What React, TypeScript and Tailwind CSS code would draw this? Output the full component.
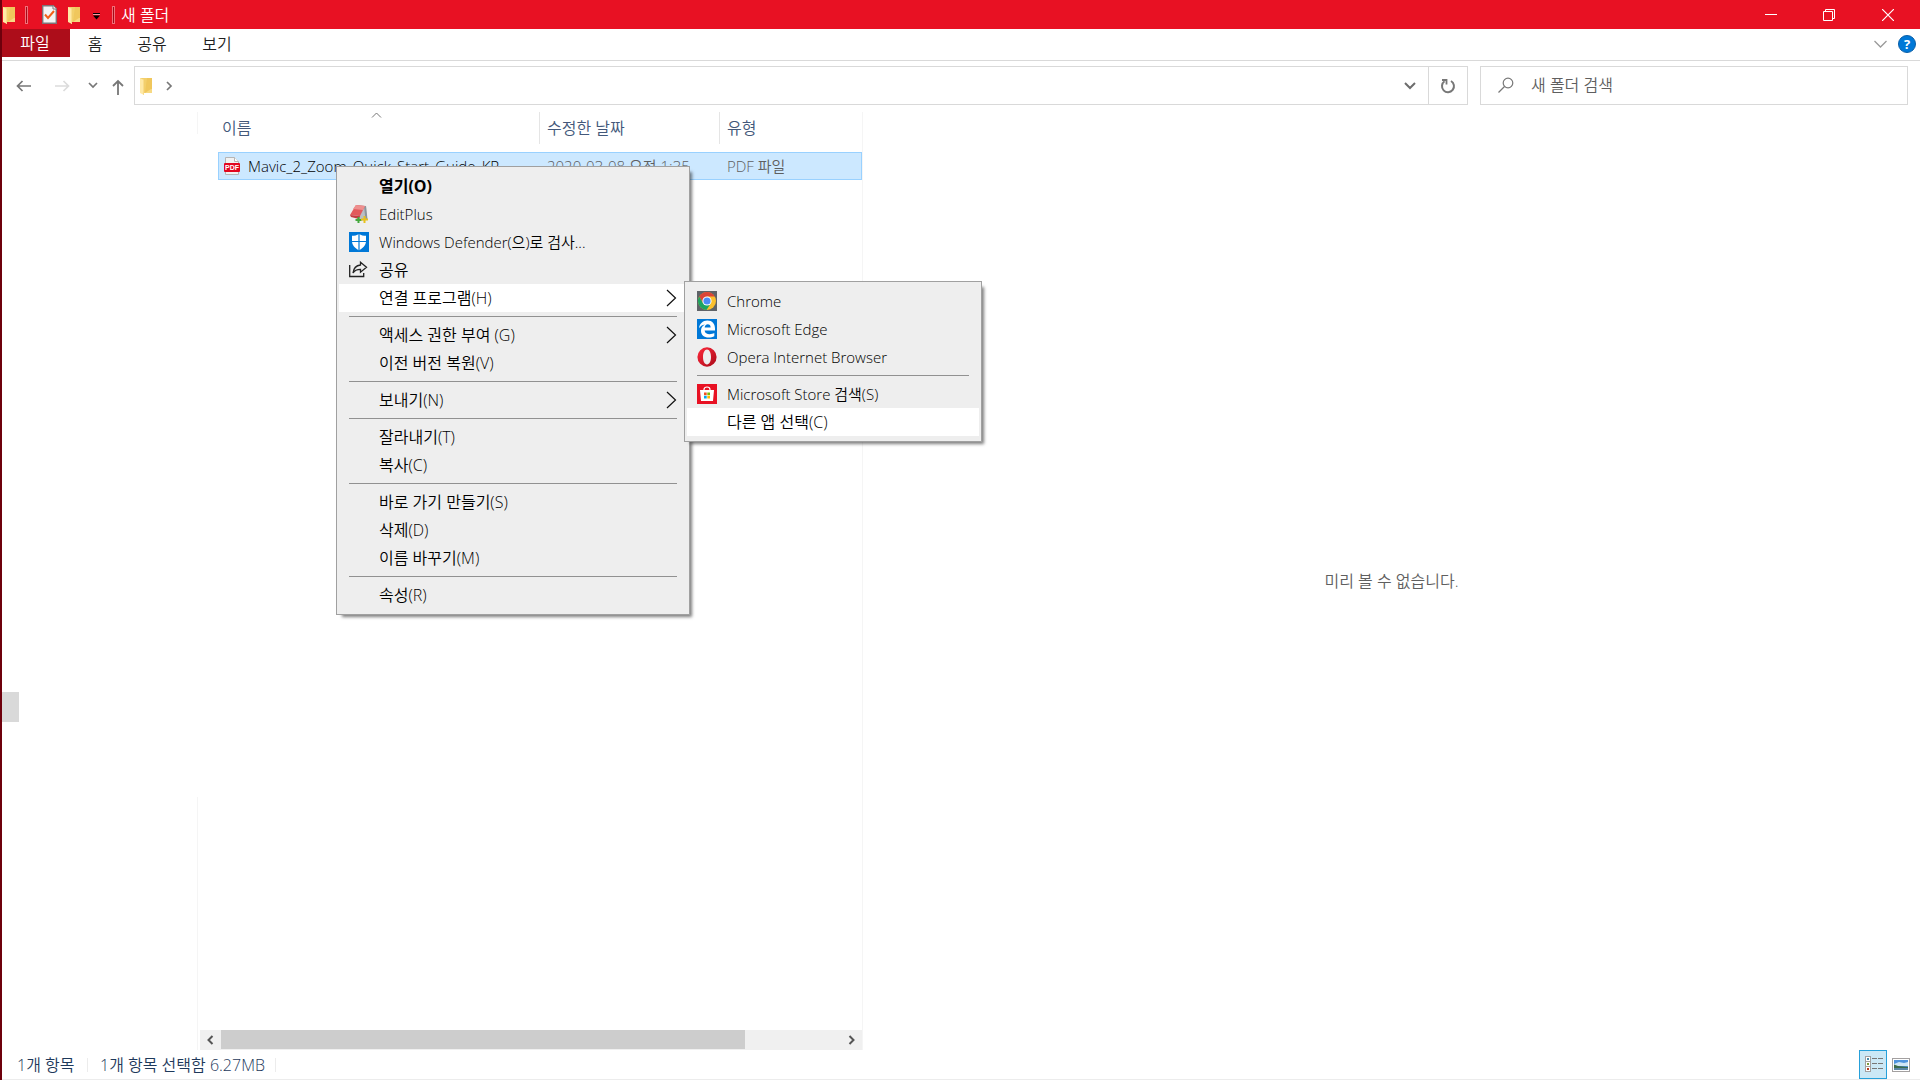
import React from "react";

type IconProps = { className?: string };

function FolderIcon({ className }: IconProps) {
  return (
    <svg className={className} width="13" height="18" viewBox="0 0 13 18">
      <path d="M0 1h8v15H0z" fill="#f3cf6b" />
      <path d="M7 1h5v13l-1 2H5z" fill="#f0c75c" />
      <path d="M11 12h1v4h-7z" fill="#f7d983" />
      <path d="M0 1l4 2v15l-4-2z" fill="#ffe9a6" />
      <path d="M3 2.500L4 3v15l-1-.5z" fill="#f9dc8a" />
    </svg>
  );
}

function CheckDocIcon() {
  return (
    <svg width="15" height="19" viewBox="0 0 15 19">
      <path d="M.7 .7h10.600l3 3v14.600H.7z" fill="#f4f4f4" stroke="#7d7478" strokeWidth="1.400" />
      <path d="M11 .7v3.300h3.300" fill="#fff" stroke="#7d7478" />
      <path d="M3 9.500l3 3.500 6-7" fill="none" stroke="#f0601a" strokeWidth="2" />
    </svg>
  );
}

function PdfIcon() {
  return (
    <svg className="shrink-0" width="16" height="18" viewBox="0 0 16 18" aria-hidden="true">
      <path d="M1.500 .5h9l4 4v13h-13z" fill="#f2f2f2" stroke="#b5b5b5" />
      <path d="M10.500 .5v4h4" fill="#fff" stroke="#b5b5b5" />
      <rect y="6" width="16" height="9" rx="1" fill="#e2061f" />
      <text x="8" y="13" textAnchor="middle" fontSize="7" fontWeight="bold" fill="#fff" fontFamily="Liberation Sans, sans-serif">
        PDF
      </text>
    </svg>
  );
}

function EditPlusIcon() {
  return (
    <svg width="20" height="20" viewBox="0 0 20 20">
      <path d="M7 1l10 1 1 14-8 1z" fill="#b9bfc4" />
      <path d="M15 2l2 0 1.500 13-2 1z" fill="#8c959c" />
      <path d="M7 1l9 1-5 10L1 11z" fill="#e2595c" />
      <path d="M7 1l9 1-2 4-10-1z" fill="#ee8f8e" />
      <path d="M1 11l10 1-1 3L2 13z" fill="#c63b42" />
      <path d="M8.500 13h2v2h2v2h-2v2h-2v-2h-2v-2h2z" fill="#43a83c" />
      <path d="M14.500 12h2v2.500H19v2h-2.500V19h-2v-2.500H12v-2h2.500z" fill="#e8c11c" />
    </svg>
  );
}

function DefenderIcon() {
  return (
    <svg width="20" height="20" viewBox="0 0 20 20">
      <path fill="#0078d7" d="M0 0h20v20H0z" />
      <path d="M10 2c2 1.300 4.500 1.800 7 1.800V9c0 4-3 7.500-7 9.200C6 16.500 3 13 3 9V3.800c2.500 0 5-.5 7-1.800z" fill="#fff" />
      <path d="M10 2v16M3 9.500h14" stroke="#0078d7" strokeWidth="1.200" />
    </svg>
  );
}

function ShareIcon() {
  return (
    <svg width="20" height="20" viewBox="0 0 20 20" fill="none" stroke="#222" strokeWidth="1.300">
      <path d="M.7 5v11.500h14V13" />
      <path d="M11.500 2.200l6 5-6 5V9.300c-3.500 0-6 1-7.500 3.700.5-4.500 3-7.500 7.500-8z" />
    </svg>
  );
}

function ChromeIcon() {
  return (
    <svg width="20" height="20" viewBox="0 0 20 20">
      <path fill="#5f6368" d="M0 0h20v20H0z" />
      <circle cx="10" cy="10" r="9" fill="#fbc02d" />
      <path d="M2.200 5.500A9 9 0 0 1 17.800 5.500H10L6.100 12.200z" fill="#db4437" />
      <path d="M2.200 5.500A9 9 0 0 0 9.500 19l4.400-6.800H6.100z" fill="#1da462" />
      <circle cx="10" cy="10" r="4.600" fill="#fff" />
      <circle cx="10" cy="10" r="3.600" fill="#4c8bf5" />
    </svg>
  );
}

function EdgeIcon() {
  return (
    <svg width="20" height="20" viewBox="0 0 20 20">
      <path fill="#0078d7" d="M0 0h20v20H0z" />
      <path
        d="M2 9.200C2.600 4.700 5.800 1.500 10.300 1.500c5 0 7.700 3.500 7.700 8v2H7.600c.2 2.500 2.500 3.700 5 3.700 1.800 0 3.400-.5 4.700-1.200v3.300c-1.600.9-3.600 1.300-5.600 1.300-4.700 0-7.700-2.700-7.700-6.800 0-2.800 1.400-5 3.900-6.300C5 6 3.300 7.300 2 9.200zM7.700 8.400h5.900c0-2-1-3.100-2.800-3.100S7.900 6.600 7.700 8.400z"
        fill="#fff"
      />
    </svg>
  );
}

function OperaIcon() {
  return (
    <svg width="20" height="20" viewBox="0 0 20 20">
      <defs>
        <linearGradient id="opera" x1="0" y1="0" x2="1" y2="1">
          <stop offset="0" stopColor="#ff2a3c" />
          <stop offset="1" stopColor="#a90a18" />
        </linearGradient>
      </defs>
      <path
        fillRule="evenodd"
        d="M10 .3a9.600 9.700 0 1 0 0 19.400A9.600 9.700 0 1 0 10 .3zM10 2.600c2.400 0 4 3.200 4 7.400s-1.600 7.400-4 7.400S6 14.200 6 10s1.600-7.400 4-7.400z"
        fill="url(#opera)"
      />
    </svg>
  );
}

function StoreIcon() {
  return (
    <svg width="20" height="20" viewBox="0 0 20 20">
      <path fill="#e81123" d="M0 0h20v20H0z" />
      <path d="M3 6h14l-1 11H4z" fill="#fff" />
      <path d="M7 7V5.500C7 4 8.200 3 10 3s3 1 3 2.500V7" fill="none" stroke="#fff" strokeWidth="1.200" />
      <path d="M7 8.500h2.700v2.700H7z" fill="#f25022" />
      <path d="M10.300 8.500H13v2.700h-2.700z" fill="#7fba00" />
      <path d="M7 11.800h2.700v2.700H7z" fill="#00a4ef" />
      <path d="M10.300 11.800H13v2.700h-2.700z" fill="#ffb900" />
    </svg>
  );
}

type Entry = {
  label: string;
  icon?: React.ReactNode;
  bold?: boolean;
  active?: boolean;
  sub?: boolean;
  latin?: boolean;
} | null;

const mainMenu: Entry[] = [
  { label: "열기(O)", bold: true },
  { label: "EditPlus", icon: <EditPlusIcon />, latin: true },
  { label: "Windows Defender(으)로 검사...", icon: <DefenderIcon />, latin: true },
  { label: "공유", icon: <ShareIcon /> },
  { label: "연결 프로그램(H)", active: true, sub: true },
  null,
  { label: "액세스 권한 부여 (G)", sub: true },
  { label: "이전 버전 복원(V)" },
  null,
  { label: "보내기(N)", sub: true },
  null,
  { label: "잘라내기(T)" },
  { label: "복사(C)" },
  null,
  { label: "바로 가기 만들기(S)" },
  { label: "삭제(D)" },
  { label: "이름 바꾸기(M)" },
  null,
  { label: "속성(R)" },
];

const openWithMenu: Entry[] = [
  { label: "Chrome", icon: <ChromeIcon />, latin: true },
  { label: "Microsoft Edge", icon: <EdgeIcon />, latin: true },
  { label: "Opera Internet Browser", icon: <OperaIcon />, latin: true },
  null,
  { label: "Microsoft Store 검색(S)", icon: <StoreIcon />, latin: true },
  { label: "다른 앱 선택(C)", active: true },
];

function Menu({ entries, className }: { entries: Entry[]; className: string }) {
  return (
    <div
      role="menu"
      className={`absolute border border-[#a0a0a0] bg-[#eeeeee] px-0.5 py-[5px] text-black shadow-[4px_4px_3px_-2px_rgba(0,0,0,0.5)] ${className}`}
    >
      {entries.map((e, i) =>
        e === null ? (
          <div key={i} role="separator" className="mx-2.5 flex h-[9px] items-center">
            <div className="h-px w-full bg-[#919191]" />
          </div>
        ) : (
          <button
            key={i}
            role="menuitem"
            className={`flex h-7 w-full items-center px-2.5 text-left ${e.active ? "bg-white" : ""} ${e.bold ? "font-bold" : ""}`}
          >
            <span className="w-[30px] shrink-0">{e.icon}</span>
            <span className={`grow whitespace-nowrap ${e.latin ? "text-[15px]" : ""}`}>{e.label}</span>
            {e.sub && (
              <svg width="12" height="18" viewBox="0 0 12 18" fill="none" stroke="#111" strokeWidth="1.200">
                <path d="M2 1l8.500 8L2 17" />
              </svg>
            )}
          </button>
        )
      )}
    </div>
  );
}

function TitleBar() {
  return (
    <header className="flex h-[29px] shrink-0 items-center bg-[#e81123] text-white">
      <FolderIcon className="ml-px" />
      <span className="ml-[9px] h-[18px] w-[3px] border border-[#f0707a] bg-[#a30c18]" />
      <button className="ml-3.5" aria-label="속성">
        <CheckDocIcon />
      </button>
      <button className="ml-[11px]" aria-label="새 폴더">
        <FolderIcon />
      </button>
      <button className="mt-1 ml-3" aria-label="빠른 실행 도구 모음 사용자 지정">
        <svg width="7" height="7" viewBox="0 0 7 7">
          <path d="M0 0h7v1H0zM0 2.500h7L3.500 6.500z" fill="#000" />
          <path d="M0 1h7v1H0z" fill="#f59aa1" />
        </svg>
      </button>
      <span className="ml-3 h-[18px] w-[3px] border border-[#f0707a] bg-[#a30c18]" />
      <h1 className="ml-1.5 grow">새 폴더</h1>
      <button className="flex h-full w-[58px] items-center justify-center" aria-label="최소화">
        <svg width="12" height="12" viewBox="0 0 12 12">
          <path d="M0 5h12v1H0z" fill="#fff" />
        </svg>
      </button>
      <button className="flex h-full w-[58px] items-center justify-center" aria-label="이전 크기로 복원">
        <svg width="12" height="12" viewBox="0 0 12 12" fill="none" stroke="#fff">
          <path d="M.5 2.500h9v9h-9zM2.500 2.500v-2h9v9h-2" />
        </svg>
      </button>
      <button className="mr-[3px] flex h-full w-[59px] items-center justify-center" aria-label="닫기">
        <svg width="12" height="12" viewBox="0 0 12 12" stroke="#fff" strokeWidth="1.200">
          <path d="M0 0l12 12M12 0L0 12" />
        </svg>
      </button>
    </header>
  );
}

function Ribbon() {
  return (
    <nav className="flex h-8 shrink-0 items-start border-b border-[#d9d9d9] text-[#1f1f1f]">
      <button className="h-7 w-[68px] bg-[#ad0d1a] pr-0.5 text-white">파일</button>
      <button className="h-[30px] w-[50px]">홈</button>
      <button className="h-[30px] w-[64px]">공유</button>
      <button className="h-[30px] w-[66px]">보기</button>
      <div className="grow" />
      <button className="mr-[11px] flex h-[30px] items-center" aria-label="리본 확장">
        <svg width="13" height="8" viewBox="0 0 13 8" fill="none" stroke="#9a9a9a" strokeWidth="1.300">
          <path d="M.5 1l6 6 6-6" />
        </svg>
      </button>
      <button
        className="mt-1.5 mr-1 h-[18px] w-[18px] rounded-full border border-[#0a5fa8] bg-[#0078d7] text-[13px] leading-4 font-bold text-white"
        aria-label="도움말"
      >
        ?
      </button>
    </nav>
  );
}

function AddressRow() {
  return (
    <div className="flex h-[51px] shrink-0 items-start pt-[5px] pr-3 text-[#5f5f5f]">
      <div className="flex h-[39px] w-[132px] items-center">
        <button className="ml-3.5" aria-label="뒤로">
          <svg width="16" height="12" viewBox="0 0 16 12" fill="none" stroke="#777" strokeWidth="1.700">
            <path d="M15 6H1.500M6.500 1l-5 5 5 5" />
          </svg>
        </button>
        <button className="ml-[22px]" aria-label="앞으로">
          <svg width="16" height="12" viewBox="0 0 16 12" fill="none" stroke="#dcdcdc" strokeWidth="1.700">
            <path d="M1 6h13.500M9.500 1l5 5-5 5" />
          </svg>
        </button>
        <button className="ml-[18px]" aria-label="최근 위치">
          <svg width="10" height="7" viewBox="0 0 10 7" fill="none" stroke="#777" strokeWidth="1.700">
            <path d="M1 1l4 4 4-4" />
          </svg>
        </button>
        <button className="mt-0.5 ml-3.5" aria-label="위로">
          <svg width="12" height="16" viewBox="0 0 12 16" fill="none" stroke="#777" strokeWidth="1.800">
            <path d="M6 16V2M1 7l5-5 5 5" />
          </svg>
        </button>
      </div>
      <div className="flex h-[39px] grow items-center border border-[#d9d9d9]">
        <FolderIcon className="ml-[5px]" />
        <button className="ml-[13px]" aria-label="경로 펼치기">
          <svg width="7" height="10" viewBox="0 0 7 10" fill="none" stroke="#777" strokeWidth="1.700">
            <path d="M1 1l4 4-4 4" />
          </svg>
        </button>
        <div className="grow" />
        <button className="mr-3" aria-label="이전 위치">
          <svg width="12" height="8" viewBox="0 0 12 8" fill="none" stroke="#6d6d6d" strokeWidth="2">
            <path d="M1 1l5 5 5-5" />
          </svg>
        </button>
        <button className="flex h-full w-[39px] items-center justify-center border-l border-[#d9d9d9]" aria-label="새로 고침">
          <svg width="16" height="16" viewBox="0 0 16 16" fill="none" stroke="#777" strokeWidth="2">
            <path d="M11 3a6 6 0 1 1-6.500.3" />
            <path d="M2 2h4.500v4.500" strokeWidth="1.800" />
          </svg>
        </button>
      </div>
      <label className="ml-3 flex h-[39px] w-[428px] items-center border border-[#d9d9d9] pl-4">
        <svg width="17" height="17" viewBox="0 0 17 17" fill="none" stroke="#777" strokeWidth="1.200">
          <circle cx="11" cy="6" r="4.800" />
          <path d="M7.500 9.500L1.500 15.500" />
        </svg>
        <input
          type="text"
          aria-label="새 폴더 검색"
          placeholder="새 폴더 검색"
          className="ml-[17px] h-6 min-w-0 grow pb-0.5 outline-none placeholder:text-[#5f5f5f]"
        />
      </label>
    </div>
  );
}

function FileTable() {
  return (
    <table className="ml-[18px] w-[644px] table-fixed border-collapse text-left">
      <colgroup>
        <col className="w-[322px]" />
        <col className="w-[180px]" />
        <col />
      </colgroup>
      <thead className="text-[#43587a]">
        <tr>
          <th className="relative p-0 pb-2 font-[350]">
            <svg className="absolute top-0 left-[153px]" width="11" height="6" viewBox="0 0 11 6" fill="none" stroke="#777">
              <path d="M1 5.500l4.500-4.500L10 5.500" />
            </svg>
            <div className="flex h-8 items-center border-r border-[#e5e5e5] pl-1">이름</div>
          </th>
          <th className="p-0 pb-2 font-[350]">
            <div className="flex h-8 items-center border-r border-[#e5e5e5] pl-[7px]">수정한 날짜</div>
          </th>
          <th className="p-0 pb-2 font-[350]">
            <div className="flex h-8 items-center pl-[7px]">유형</div>
          </th>
        </tr>
      </thead>
      <tbody>
        <tr className="h-7 bg-[#cce8ff] whitespace-nowrap text-[#5f5f5f] outline-1 -outline-offset-1 outline-[#99d1ff]">
          <td className="p-0">
            <div className="flex items-center gap-2 pl-1.5 text-[15px] text-black">
              <PdfIcon />
              Mavic_2_Zoom_Quick_Start_Guide_KR
            </div>
          </td>
          <td className="p-0 pl-[7px] text-[15px]">2020-03-08 오전 1:35</td>
          <td className="p-0 pl-[7px] text-[15px]">PDF 파일</td>
        </tr>
      </tbody>
    </table>
  );
}

function HorizontalScrollbar() {
  return (
    <div className="mt-auto flex h-5 w-[662px] bg-[#f0f0f0]">
      <button className="flex w-[21px] items-center pl-1.5" aria-label="왼쪽으로 스크롤">
        <svg width="8" height="10" viewBox="0 0 8 10" fill="none" stroke="#555" strokeWidth="2">
          <path d="M6.500 1l-4 4 4 4" />
        </svg>
      </button>
      <div className="mb-px w-[524px] bg-[#cdcdcd]" />
      <button className="ml-auto flex w-[21px] items-center justify-center" aria-label="오른쪽으로 스크롤">
        <svg width="8" height="10" viewBox="0 0 8 10" fill="none" stroke="#555" strokeWidth="2">
          <path d="M1.500 1l4 4-4 4" />
        </svg>
      </button>
    </div>
  );
}

function StatusBar() {
  return (
    <footer className="flex h-[30px] shrink-0 items-center border-b border-[#ececec] text-[#1e395b]">
      <span className="w-[85px] pl-[15px]">1개 항목</span>
      <span className="h-3.5 w-px bg-[#ececec]" />
      <span className="w-[187px] pl-3 whitespace-nowrap">1개 항목 선택함 6.27MB</span>
      <span className="h-3.5 w-px bg-[#ececec]" />
      <div className="grow" />
      <button className="flex h-[29px] w-7 items-center justify-center border border-[#26a0da] bg-[#cbe8f6]" aria-label="자세히">
        <svg width="20" height="17" viewBox="0 0 20 17">
          {[1, 6, 11].map((y, i) => (
            <g key={y}>
              <rect x="2.500" y={y - 0.5} width="5" height="5" fill="#fff" stroke="#a3a0a0" />
              <rect x="4" y={y + 1} width="2" height="2" fill={["#4a8aa8", "#7a9a3a", "#b8391c"][i]} />
              <path d={`M9 ${y + 1}h5v1H9zM15 ${y + 1}h5v1h-5z`} fill="#777" />
            </g>
          ))}
        </svg>
      </button>
      <button className="mr-2.5 ml-[5px]" aria-label="큰 아이콘">
        <svg width="18" height="14" viewBox="0 0 18 14">
          <rect x=".5" y=".5" width="17" height="13" fill="#fff" stroke="#a3a0a0" />
          <rect x="2" y="2" width="14" height="10" fill="#4f94dd" />
          <path d="M2 6l5-2 5 1 4-1v4H2z" fill="#cfe6f5" />
          <path d="M2 6.500l4 1.500 10 1v1H2z" fill="#3c6b4c" />
          <path d="M2 10h14v2H2z" fill="#5a86a5" />
        </svg>
      </button>
    </footer>
  );
}

export default function App() {
  return (
    <div className="relative flex h-screen flex-col overflow-hidden border-l-2 border-[#6e000c] bg-white font-['Open_Sans','Noto_Sans_CJK_KR',sans-serif] text-base leading-6 font-[350]">
      <TitleBar />
      <Ribbon />
      <AddressRow />
      <main className="flex min-h-0 grow">
        <aside className="flex w-[196px] shrink-0 flex-col">
          <div className="h-[22px] border-r border-[#f5f5f5]" />
          <div className="mt-auto h-[30px] w-[17px] bg-[#d9d9d9]" />
          <div className="mt-[75px] h-[253px] border-r border-[#f5f5f5]" />
        </aside>
        <section className="flex w-[665px] shrink-0 flex-col border-r border-[#f5f5f5] pl-0.5">
          <FileTable />
          <HorizontalScrollbar />
        </section>
        <section className="flex grow items-center justify-center text-[#5f5f5f]">미리 볼 수 없습니다.</section>
      </main>
      <StatusBar />
      <Menu entries={mainMenu} className="top-[166px] left-[334px] w-[354px]" />
      <Menu entries={openWithMenu} className="top-[281px] left-[682px] w-[298px]" />
    </div>
  );
}
